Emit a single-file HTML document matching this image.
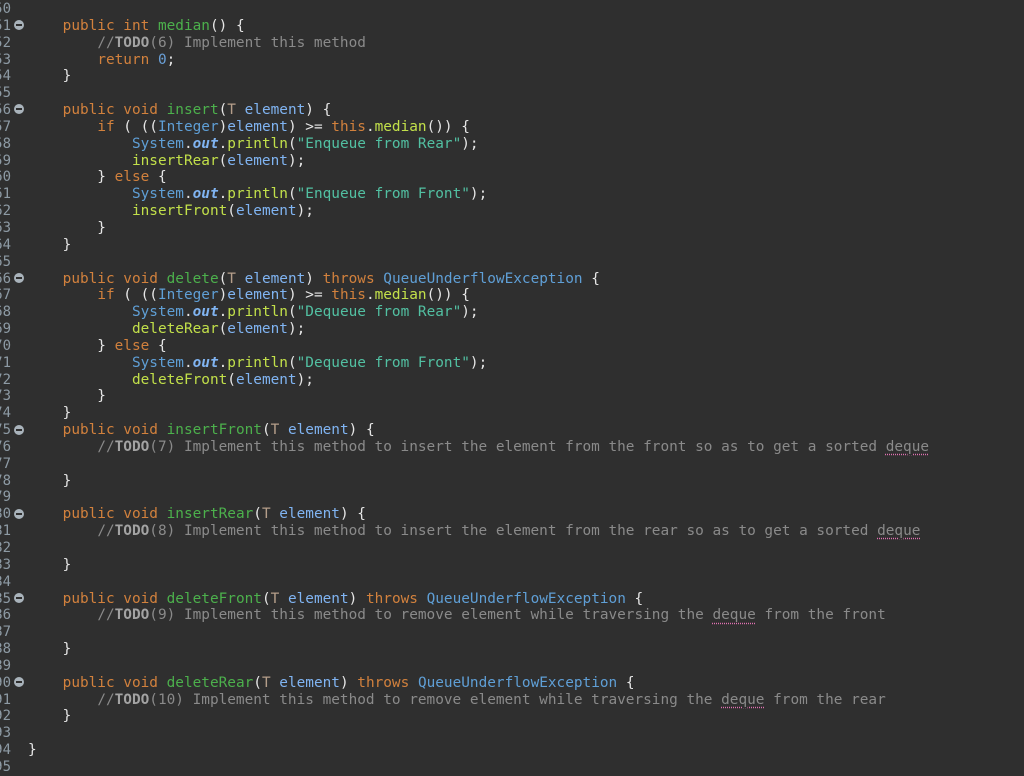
<!DOCTYPE html>
<html><head><meta charset="utf-8">
<style>
html,body{margin:0;padding:0;background:#2f2f2f;width:1024px;height:769px;overflow:hidden}
.wrap{position:absolute;left:0;top:0;width:1024px;height:769px}
.ln{position:absolute;left:-11px;width:22px;text-align:right;font-family:"DejaVu Sans Mono",monospace;font-size:14px;color:#8d9aa4;line-height:16.84px;white-space:pre}
.fold{position:absolute;left:14px;width:10px;height:10px;border-radius:50%;background:#a9b3bb}
.fold:after{content:"";position:absolute;left:2px;top:4px;width:6px;height:2px;background:#2f2f2f}
.code{position:absolute;left:28px;font-family:"DejaVu Sans Mono",monospace;font-size:14.4px;line-height:16.84px;color:#e6e6e6;white-space:pre}
.k{color:#d2813d}.m{color:#4cb04c}.c{color:#c2e04a}.t{color:#5f9fd6}.p{color:#80b4f2}.g{color:#b59e8a}
.cm{color:#8a8a8a}.td{color:#a3a3a3;font-weight:bold}.s{color:#52c0a2}.n{color:#6aa0d8}.o{color:#80b4f2;font-weight:bold;font-style:italic}
.u{text-decoration:underline dotted #e070b0;text-underline-offset:3px}
</style></head><body><div class="wrap">
<div class="ln" style="top:1px">50
51
52
53
54
55
56
57
58
59
60
61
62
63
64
65
66
67
68
69
70
71
72
73
74
75
76
77
78
79
80
81
82
83
84
85
86
87
88
89
90
91
92
93
94
95</div>
<div class="fold" style="top:20px"></div>
<div class="fold" style="top:104px"></div>
<div class="fold" style="top:273px"></div>
<div class="fold" style="top:425px"></div>
<div class="fold" style="top:509px"></div>
<div class="fold" style="top:593px"></div>
<div class="fold" style="top:677px"></div>
<div class="code" style="top:1px">
    <span class="k">public int</span> <span class="m">median</span>() {
        <span class="cm">//</span><span class="td">TODO</span><span class="cm">(6) Implement this method</span>
        <span class="k">return</span> <span class="n">0</span>;
    }

    <span class="k">public void</span> <span class="m">insert</span>(<span class="g">T</span> <span class="p">element</span>) {
        <span class="k">if</span> ( ((<span class="t">Integer</span>)<span class="p">element</span>) &gt;= <span class="k">this</span>.<span class="c">median</span>()) {
            <span class="t">System</span>.<span class="o">out</span>.<span class="c">println</span>(<span class="s">"Enqueue from Rear"</span>);
            <span class="c">insertRear</span>(<span class="p">element</span>);
        } <span class="k">else</span> {
            <span class="t">System</span>.<span class="o">out</span>.<span class="c">println</span>(<span class="s">"Enqueue from Front"</span>);
            <span class="c">insertFront</span>(<span class="p">element</span>);
        }
    }

    <span class="k">public void</span> <span class="m">delete</span>(<span class="g">T</span> <span class="p">element</span>) <span class="k">throws</span> <span class="t">QueueUnderflowException</span> {
        <span class="k">if</span> ( ((<span class="t">Integer</span>)<span class="p">element</span>) &gt;= <span class="k">this</span>.<span class="c">median</span>()) {
            <span class="t">System</span>.<span class="o">out</span>.<span class="c">println</span>(<span class="s">"Dequeue from Rear"</span>);
            <span class="c">deleteRear</span>(<span class="p">element</span>);
        } <span class="k">else</span> {
            <span class="t">System</span>.<span class="o">out</span>.<span class="c">println</span>(<span class="s">"Dequeue from Front"</span>);
            <span class="c">deleteFront</span>(<span class="p">element</span>);
        }
    }
    <span class="k">public void</span> <span class="m">insertFront</span>(<span class="g">T</span> <span class="p">element</span>) {
        <span class="cm">//</span><span class="td">TODO</span><span class="cm">(7) Implement this method to insert the element from the front so as to get a sorted <span class="u">deque</span></span>

    }

    <span class="k">public void</span> <span class="m">insertRear</span>(<span class="g">T</span> <span class="p">element</span>) {
        <span class="cm">//</span><span class="td">TODO</span><span class="cm">(8) Implement this method to insert the element from the rear so as to get a sorted <span class="u">deque</span></span>

    }

    <span class="k">public void</span> <span class="m">deleteFront</span>(<span class="g">T</span> <span class="p">element</span>) <span class="k">throws</span> <span class="t">QueueUnderflowException</span> {
        <span class="cm">//</span><span class="td">TODO</span><span class="cm">(9) Implement this method to remove element while traversing the <span class="u">deque</span> from the front</span>

    }

    <span class="k">public void</span> <span class="m">deleteRear</span>(<span class="g">T</span> <span class="p">element</span>) <span class="k">throws</span> <span class="t">QueueUnderflowException</span> {
        <span class="cm">//</span><span class="td">TODO</span><span class="cm">(10) Implement this method to remove element while traversing the <span class="u">deque</span> from the rear</span>
    }

}
</div>
</div></body></html>
